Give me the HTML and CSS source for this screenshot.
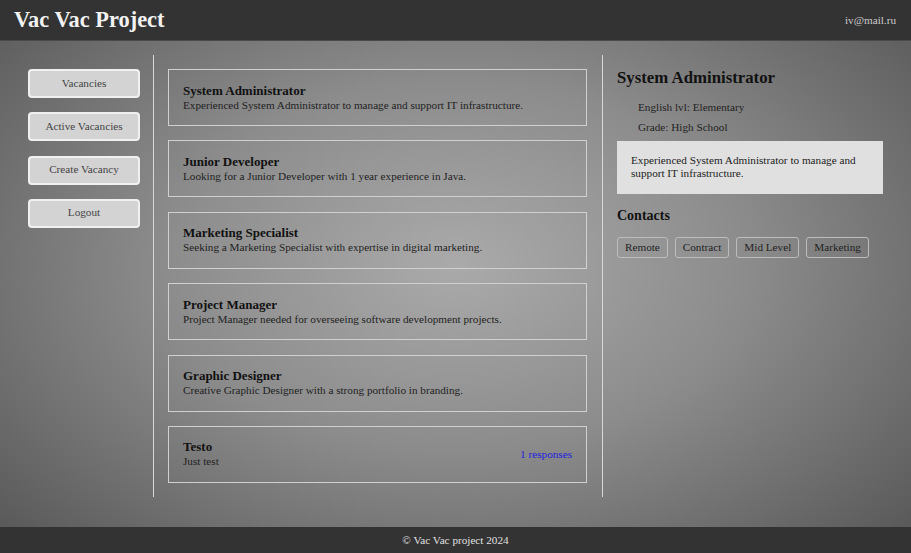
FILE: index.html
```html
<!DOCTYPE html>
<html>
<head>
<meta charset="utf-8">
<link rel="stylesheet" href="styles.css">
</head>
<body>
<header class="topbar">
  <div class="brand">Vac Vac Project</div>
  <div class="user">iv@mail.ru</div>
</header>
<main class="layout">
  <nav class="sidebar">
    <button class="nav-btn">Vacancies</button>
    <button class="nav-btn">Active Vacancies</button>
    <button class="nav-btn">Create Vacancy</button>
    <button class="nav-btn">Logout</button>
  </nav>
  <section class="list">
    <div class="card"><div class="card-body"><div class="card-title">System Administrator</div><div class="card-desc">Experienced System Administrator to manage and support IT infrastructure.</div></div></div>
    <div class="card"><div class="card-body"><div class="card-title">Junior Developer</div><div class="card-desc">Looking for a Junior Developer with 1 year experience in Java.</div></div></div>
    <div class="card"><div class="card-body"><div class="card-title">Marketing Specialist</div><div class="card-desc">Seeking a Marketing Specialist with expertise in digital marketing.</div></div></div>
    <div class="card"><div class="card-body"><div class="card-title">Project Manager</div><div class="card-desc">Project Manager needed for overseeing software development projects.</div></div></div>
    <div class="card"><div class="card-body"><div class="card-title">Graphic Designer</div><div class="card-desc">Creative Graphic Designer with a strong portfolio in branding.</div></div></div>
    <div class="card"><div class="card-body"><div class="card-title">Testo</div><div class="card-desc">Just test</div></div><a class="responses" href="#">1 responses</a></div>
  </section>
  <aside class="details">
    <h2 class="det-title">System Administrator</h2>
    <div class="det-meta">English lvl: Elementary</div>
    <div class="det-meta">Grade: High School</div>
    <div class="det-desc">Experienced System Administrator to manage and support IT infrastructure.</div>
    <h3 class="det-sub">Contacts</h3>
    <div class="tags">
      <span class="tag">Remote</span>
      <span class="tag">Contract</span>
      <span class="tag">Mid Level</span>
      <span class="tag">Marketing</span>
    </div>
  </aside>
</main>
<footer class="footer">© Vac Vac project 2024</footer>
</body>
</html>
```
FILE: styles.css
```css
html, body {
  margin: 0;
  padding: 0;
  height: 100%;
}
body {
  font-family: "Liberation Serif", "Times New Roman", serif;
  display: flex;
  flex-direction: column;
  background: radial-gradient(ellipse at 50% 48%, #aaaaaa 0%, #8c8c8c 45%, #555555 100%);
  color: #111;
}
.topbar {
  height: 40px;
  background: #333333;
  border-bottom: 1px solid #4a4a4a;
  display: flex;
  align-items: center;
  justify-content: space-between;
  padding: 0 15px 0 14px;
  flex-shrink: 0;
}
.brand {
  color: #f2f2f2;
  font-weight: bold;
  font-size: 22.4px;
}
.user {
  color: #cccccc;
  font-size: 11.2px;
}
.layout {
  flex: 1;
  display: flex;
  align-items: flex-start;
  padding: 14px 0 30px;
}
.sidebar {
  width: 154px;
  box-sizing: border-box;
  align-self: stretch;
  border-right: 1px solid #d8d8d8;
  padding: 14px 0 0 28px;
  display: flex;
  flex-direction: column;
  gap: 14.33px;
}
.nav-btn {
  width: 112px;
  height: 29px;
  background: #d3d3d3;
  border: 2px solid #f0f0f0;
  border-radius: 4px;
  font-family: "Liberation Serif", serif;
  font-size: 11.2px;
  line-height: 12px;
  color: #444;
  padding: 0 0 2px;
}
.list {
  width: 449px;
  box-sizing: border-box;
  border-right: 1px solid #d8d8d8;
  padding: 14px 15px 14px 14px;
  display: flex;
  flex-direction: column;
  gap: 14.4px;
}
.card {
  height: 57px;
  box-sizing: border-box;
  border: 1px solid #d0d0d0;
  padding: 0 14px;
  display: flex;
  align-items: center;
  justify-content: space-between;
}
.card-title {
  font-weight: bold;
  font-size: 13px;
  line-height: 14px;
  color: #111;
}
.card-desc {
  font-size: 11.2px;
  line-height: 14px;
  color: #222;
}
.responses {
  color: #2222dd;
  font-size: 11.2px;
  text-decoration: none;
}
.details {
  flex: 1;
  padding: 13px 28px 0 14px;
}
.det-title {
  margin: 0 0 9px;
  font-size: 16.8px;
  line-height: 20px;
  color: #111;
}
.det-meta {
  font-size: 11.2px;
  line-height: 20px;
  padding-left: 21px;
  color: #222;
}
.det-desc {
  margin-top: 4px;
  background: #e0e0e0;
  padding: 13px 14px 14px;
  font-size: 11.2px;
  line-height: 13px;
  color: #222;
}
.det-sub {
  margin: 14px 0 13px;
  font-size: 14px;
  line-height: 16px;
  color: #111;
}
.tags {
  display: flex;
  gap: 7px;
}
.tag {
  height: 21px;
  box-sizing: border-box;
  font-size: 11.2px;
  line-height: 19px;
  padding: 0 7px;
  border: 1px solid #bdbdbd;
  border-radius: 3px;
  color: #222;
}
.footer {
  height: 27px;
  flex-shrink: 0;
  background: #333333;
  color: #e0e0e0;
  font-size: 11.2px;
  display: flex;
  align-items: center;
  justify-content: center;
}
```
